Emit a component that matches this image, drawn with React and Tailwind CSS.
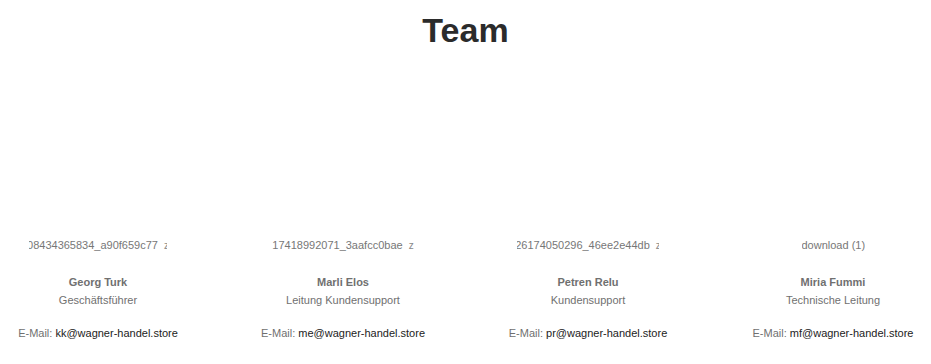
import React from "react";

const members = [
  { alt: "08434365834_a90f659c77", tail: true, w: "w-[138px] justify-center", name: "Georg Turk", role: "Geschäftsführer", mail: "kk@wagner-handel.store" },
  { alt: "17418992071_3aafcc0bae", tail: true, w: "w-[142px] justify-center", name: "Marli Elos", role: "Leitung Kundensupport", mail: "me@wagner-handel.store" },
  { alt: "26174050296_46ee2e44db", tail: true, w: "w-[142px] justify-center", name: "Petren Relu", role: "Kundensupport", mail: "pr@wagner-handel.store" },
  { alt: "download (1)", tail: false, w: "w-[63px] justify-start", name: "Miria Fummi", role: "Technische Leitung", mail: "mf@wagner-handel.store" },
];

export default function App() {
  return (
    <div className="w-[931px] h-[364px] bg-white" style={{ fontFamily: '"Liberation Sans", Arial, sans-serif' }}>
      <h1 className="pt-[10px] text-center text-[34px] leading-[40px] font-bold text-[#2b2b2b]">Team</h1>
      <div className="mx-auto grid w-[930px] grid-cols-4 gap-x-[50px]">
        {members.map((m) => (
          <div key={m.name} className="flex flex-col items-center text-[11px] leading-[16px]">
            <div className="flex h-[203px] items-end justify-center">
              <div className={`flex h-[16px] ${m.w} overflow-hidden text-[#777]`}>
                <span className="shrink-0 whitespace-nowrap">
                  {m.alt}
                  {m.tail && <span className="ml-[6px] text-[10px] text-[#888]">z</span>}
                </span>
              </div>
            </div>
            <div className="mt-[21px] font-bold text-[#707070]">{m.name}</div>
            <div className="mt-[2px] text-[#707070]">{m.role}</div>
            <div className="mt-[17px] whitespace-nowrap text-[#707070]">
              E-Mail: <span className="text-[#222]">{m.mail}</span>
            </div>
          </div>
        ))}
      </div>
    </div>
  );
}
